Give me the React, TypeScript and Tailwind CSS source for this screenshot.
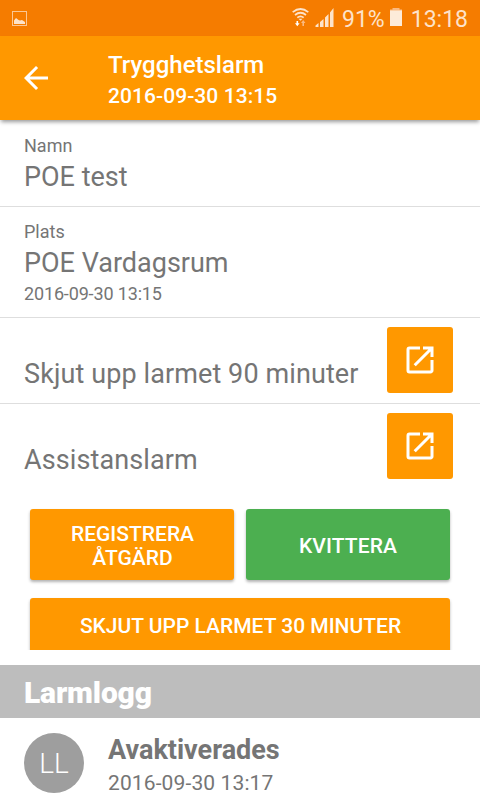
import type { ReactNode } from "react";

function StatusBar() {
  return (
    <div className="flex h-9 shrink-0 items-center justify-between bg-[#f57c00] pr-[12px] pl-[12px] text-[#fde3ca]">
      <svg width="15" height="15" viewBox="0 0 15 15" className="mt-[1px]">
        <rect x="0.5" y="0.5" width="14" height="14" fill="none" stroke="#fbc794" />
        <path d="M2 13V9.500l2-2.500 2.500 2 1.500 0.500 2-0.500 3 2v2z" fill="#fde3ca" />
      </svg>
      <div className="flex items-center">
        <svg width="17" height="19" viewBox="0 0 17 19" fill="none" stroke="#fde3ca" strokeWidth="1.7" className="-mt-px">
          <path d="M0.700 4.200Q8.500-2.200 16.300 4.200M3 7Q8.500 2.500 14 7M5.300 9.600Q8.500 7 11.700 9.600" />
          <path d="M6.500 10.800h4L8.500 12.800z" fill="#fde3ca" stroke="none" />
          <path d="M3 15.200h1.500V13h1.600v2.200h1.500L5.300 18.200z" fill="#fff" stroke="none" />
          <path d="M9 15l2.200-3 2.200 3H12v3h-1.600v-3z" fill="#fbb980" stroke="none" />
        </svg>
        <svg width="19" height="19" viewBox="0 0 19 19" className="-mt-px ml-[6px]" fill="#fde3ca">
          <path d="M0.500 19v-1.500L3.500 15v4zM5 19v-5l3.500-3v8zM10 19V9.500L13.500 6v13zM15 19V4.500L18.500 0v19z" />
        </svg>
        <span className="ml-[8px] pt-[3px] text-[23px] leading-[33px]">91%</span>
        <svg width="12" height="18" viewBox="0 0 12 18" className="-mt-[2px] ml-[5px]">
          <path d="M2.500 0h7v1.500H12V3H0V1.500h2.500z" fill="#fbb980" />
          <path d="M0 2.500h12V18H0z" fill="#fdebd9" />
        </svg>
        <span className="ml-[9px] pt-[3px] text-[23px] leading-[33px]">13:18</span>
      </div>
    </div>
  );
}

function Header() {
  return (
    <header className="flex h-[84px] shrink-0 bg-[#ff9800] pl-6 font-medium text-white shadow-[0_3px_4px_-1px_rgba(0,0,0,0.4)]">
      <svg width="24" height="24" viewBox="4 4 16 16" fill="#fff" className="mt-[30px]">
        <path d="M20 11H7.830l5.590-5.590L12 4l-8 8 8 8 1.410-1.410L7.830 13H20v-2z" />
      </svg>
      <div className="ml-[60px] pt-[15px]">
        <h1 className="text-[24px] leading-[28px]">Trygghetslarm</h1>
        <p className="mt-[5px] text-[21px] leading-[25px] tracking-[0.06px]">2016-09-30 13:15</p>
      </div>
    </header>
  );
}

function InfoRow({ label, value, spacing, children }: { label: string; value: string; spacing: string; children?: ReactNode }) {
  return (
    <section className={`${spacing} shrink-0 border-b border-[#dedede] px-6`}>
      <p className="text-[18px] leading-[21px]">{label}</p>
      <p className="mt-[5px] text-[27px] leading-[32px]">{value}</p>
      {children}
    </section>
  );
}

function ActionRow({ label, divider }: { label: string; divider?: boolean }) {
  return (
    <section className={`flex h-[86px] shrink-0 justify-between pt-[9px] pr-[27px] pl-6 ${divider ? "border-b border-[#dedede]" : ""}`}>
      <p className="mt-[31px] text-[27px] leading-[32px] tracking-[0.1px]">{label}</p>
      <button className="flex h-[66px] w-[66px] items-center justify-center rounded-[3px] bg-[#ff9800]">
        <svg width="36" height="36" viewBox="0 0 24 24" fill="#fff">
          <path d="M19 19H5V5h7V3H5a2 2 0 0 0-2 2v14a2 2 0 0 0 2 2h14c1.100 0 2-.9 2-2v-7h-2v7zM14 3v2h3.590l-9.830 9.830 1.410 1.410L19 6.410V10h2V3h-7z" />
        </svg>
      </button>
    </section>
  );
}

const raised = "rounded-[3px] text-[21px] leading-[24px] font-medium text-white shadow-[0_2px_3px_rgba(0,0,0,0.3)]";

export default function App() {
  return (
    <main className="flex h-[800px] w-[480px] flex-col overflow-hidden bg-white font-['Roboto',sans-serif] text-[#757575]">
      <StatusBar />
      <Header />
      <InfoRow label="Namn" value="POE test" spacing="h-[87px] pt-[15px]" />
      <InfoRow label="Plats" value="POE Vardagsrum" spacing="h-[111px] pt-[14px]">
        <p className="mt-[4px] text-[18px] leading-[21px] tracking-[-0.15px]">2016-09-30 13:15</p>
      </InfoRow>
      <ActionRow label="Skjut upp larmet 90 minuter" divider />
      <ActionRow label="Assistanslarm" />
      <div className="h-[160px] shrink-0 overflow-hidden px-[30px] pt-[19px]">
        <div className="grid grid-cols-2 gap-3">
          <button className={`${raised} h-[71px] bg-[#ff9800] pt-[2px] pr-6 pl-[25px]`}>REGISTRERA ÅTGÄRD</button>
          <button className={`${raised} h-[71px] bg-[#4caf50] pt-[2px] tracking-[0.1px]`}>KVITTERA</button>
        </div>
        <button className={`${raised} mt-[18px] h-[72px] w-full bg-[#ff9800] pb-[16px] pl-[1px]`}>SKJUT UPP LARMET 30 MINUTER</button>
      </div>
      <h2 className="mt-[15px] h-[53px] shrink-0 bg-[#bdbdbd] pl-6 text-[30px] leading-[56px] font-black tracking-[-0.15px] text-white">Larmlogg</h2>
      <article className="flex shrink-0 pt-[15px] pl-6">
        <div className="flex h-[60px] w-[60px] items-center justify-center rounded-full bg-[#9e9e9e] pt-[1px] text-[28px] leading-[32px] font-light text-white">LL</div>
        <div className="ml-6">
          <p className="mt-[1px] text-[27px] leading-[32px] font-bold">Avaktiverades</p>
          <p className="mt-[5px] text-[21px] leading-[25px] tracking-[0.12px]">2016-09-30 13:17</p>
        </div>
      </article>
    </main>
  );
}
